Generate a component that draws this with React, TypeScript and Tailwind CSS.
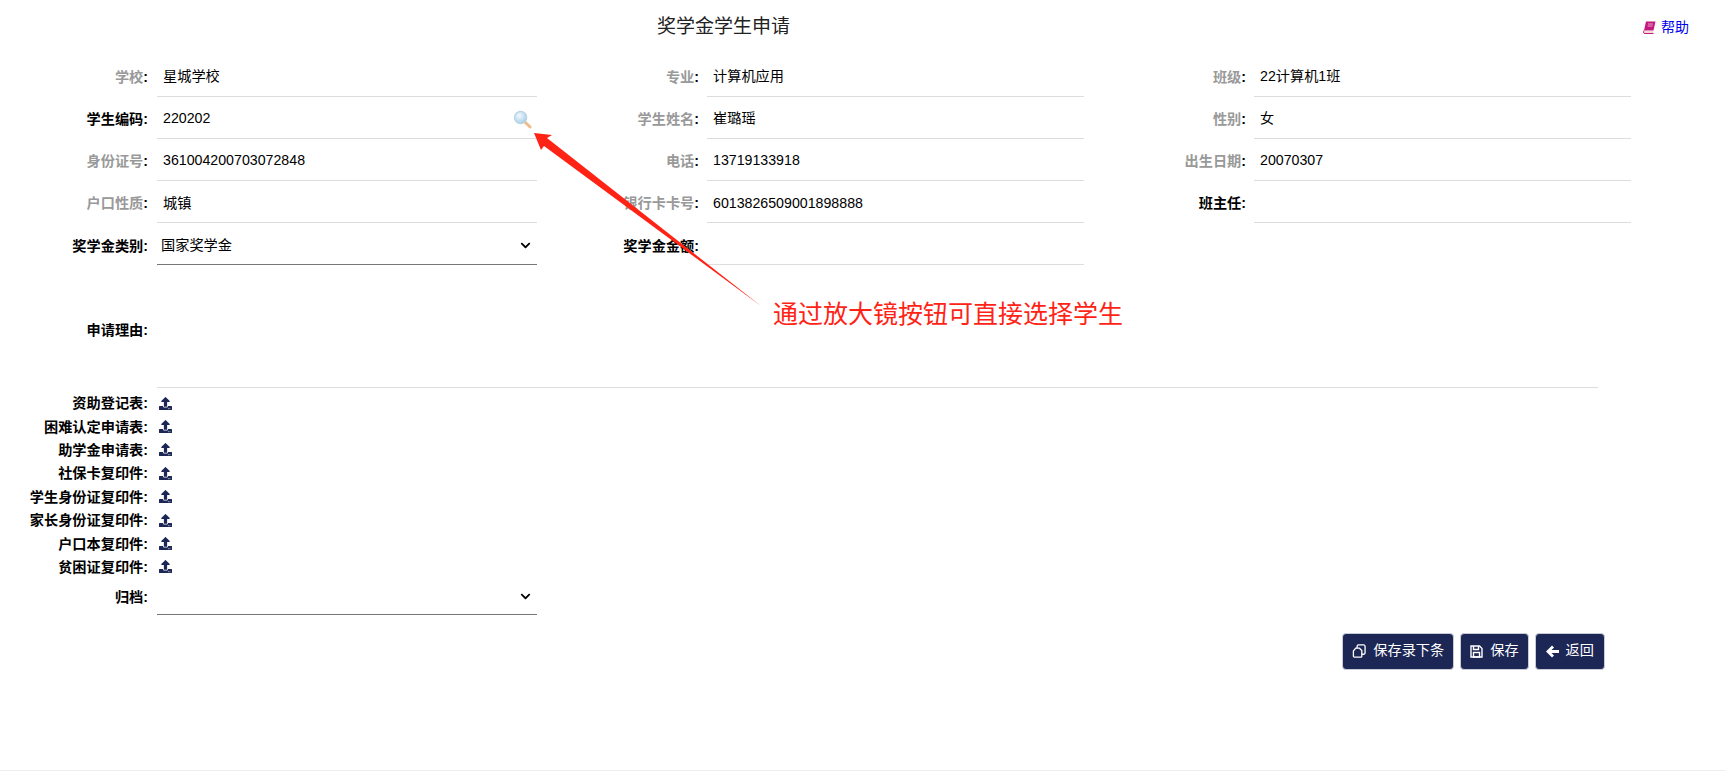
import { FaChevronDown, FaUpload } from "react-icons/fa";

const fontStack = "font-['Liberation_Sans','Noto_Sans_CJK_SC',sans-serif]";

type FieldProps = {
  label: string;
  value?: string;
  muted?: boolean;
  search?: boolean;
  select?: boolean;
  narrowGap?: boolean;
  shorter?: boolean;
  labelClass?: string;
  valueClass?: string;
};

const fields: FieldProps[] = [
  { label: "学校", value: "星城学校", muted: true, labelClass: "mt-[1px]", valueClass: "mt-[2px]" },
  { label: "专业", value: "计算机应用", muted: true, narrowGap: true, labelClass: "mt-[1px]", valueClass: "mt-[2px]" },
  { label: "班级", value: "22计算机1班", muted: true, narrowGap: true, labelClass: "mt-[1px]", valueClass: "mt-[2px]" },
  { label: "学生编码", value: "220202", search: true, labelClass: "mt-[1px]", valueClass: "mt-[3px]" },
  { label: "学生姓名", value: "崔璐瑶", muted: true, narrowGap: true, labelClass: "mt-[1px]", valueClass: "mt-[3px]" },
  { label: "性别", value: "女", muted: true, narrowGap: true, labelClass: "mt-[1px]", valueClass: "mt-[3px]" },
  { label: "身份证号", value: "361004200703072848", muted: true, labelClass: "mt-[1px]", valueClass: "mt-[3px]" },
  { label: "电话", value: "13719133918", muted: true, narrowGap: true, labelClass: "mt-[1px]", valueClass: "mt-[3px]" },
  { label: "出生日期", value: "20070307", muted: true, narrowGap: true, labelClass: "mt-[1px]", valueClass: "mt-[3px]" },
  { label: "户口性质", value: "城镇", muted: true, labelClass: "mt-[2px]", valueClass: "mt-[4px]" },
  { label: "银行卡卡号", value: "6013826509001898888", muted: true, narrowGap: true, labelClass: "mt-[2px]", valueClass: "mt-[4px]" },
  { label: "班主任", narrowGap: true, labelClass: "mt-[2px]" },
  { label: "奖学金类别", value: "国家奖学金", select: true, labelClass: "mt-[3px]", valueClass: "mt-[4px]" },
  { label: "奖学金金额", narrowGap: true, labelClass: "mt-[3px]" },
];

const uploads = [
  "资助登记表",
  "困难认定申请表",
  "助学金申请表",
  "社保卡复印件",
  "学生身份证复印件",
  "家长身份证复印件",
  "户口本复印件",
  "贫困证复印件",
];

function Label({ text, muted }: { text: string; muted?: boolean }) {
  return (
    <div className="w-[148px] shrink-0 text-right font-bold text-[14.2px] leading-5">
      <span className={muted ? "text-[#999999]" : "text-black"}>{text}</span>
      <span className="text-black">:</span>
    </div>
  );
}

function SearchIcon() {
  return (
    <svg width="19" height="19" viewBox="0 0 20 20" className="shrink-0 mt-[3px]">
      <defs>
        <radialGradient id="lens" cx="40%" cy="35%" r="65%">
          <stop offset="0%" stopColor="#f2f8fd" />
          <stop offset="100%" stopColor="#a9cfe8" />
        </radialGradient>
      </defs>
      <line x1="12" y1="12" x2="18" y2="18" stroke="#eebb88" strokeWidth="3" strokeLinecap="round" />
      <circle cx="8" cy="8" r="6.5" fill="url(#lens)" stroke="#bcd3e2" strokeWidth="1.2" />
    </svg>
  );
}

function HelpBookIcon() {
  return (
    <svg width="13" height="13" viewBox="0 0 13 13">
      <polygon points="3,0.5 12.5,0.5 10.5,9.5 1,9.5" fill="#c2187f" />
      <path d="M1 9.5 L0.6 11 Q0.5 12.5 2 12.5 H10.5" fill="none" stroke="#c2187f" strokeWidth="1" />
      <path d="M1.5 11 H10.5" stroke="#e8b7a0" strokeWidth="1" />
      <path d="M5 3 H10 M4.6 5 H9.6" stroke="#f3c4de" strokeWidth="0.8" />
    </svg>
  );
}

function CopyIcon() {
  return (
    <svg width="14" height="14" viewBox="0 0 15 15" fill="none" stroke="white" strokeWidth="1.4">
      <path d="M5.5 4.5V2.5a1.5 1.5 0 0 1 1.5-1.5h5.5a1.5 1.5 0 0 1 1.5 1.5v7a1.5 1.5 0 0 1-1.5 1.5h-2" />
      <path d="M4 4.5h4l2.5 2.5v6a1 1 0 0 1-1 1h-7a1 1 0 0 1-1-1V7.5z" />
    </svg>
  );
}

function SaveIcon() {
  return (
    <svg width="13" height="13" viewBox="0 0 13 13" fill="none" stroke="white" strokeWidth="1.4">
      <path d="M1 1h8.5L12 3.5V12H1z" />
      <path d="M3.5 1v3.5h5V1" />
      <rect x="3.5" y="7.5" width="6" height="4.5" />
    </svg>
  );
}

function BackIcon() {
  return (
    <svg width="13" height="13" viewBox="0 0 13 13" fill="white">
      <polygon points="0,6.5 6,0.5 8,2.5 5.5,5 13,5 13,8 5.5,8 8,10.5 6,12.5" />
    </svg>
  );
}

function Field({ label, value, muted, search, select, narrowGap, shorter, labelClass, valueClass }: FieldProps) {
  return (
    <div className={`flex items-center pr-[14px] ${shorter ? "h-[36px]" : "h-[42px]"}`}>
      <div className={labelClass}>
        <Label text={label} muted={muted} />
      </div>
      <div
        className={`flex-1 h-full flex items-center justify-between border-b text-[14.2px] ${
          narrowGap ? "ml-[8px]" : "ml-[9px]"
        } ${select ? "border-[#777777] pl-[4px] pr-[6px]" : "border-[#dddddd] pl-[6px] pr-[5px]"}`}
      >
        <span className={`text-black ${valueClass ?? ""}`}>{value}</span>
        {search && <SearchIcon />}
        {select && <FaChevronDown className={`text-[11px] text-black ${valueClass ?? ""}`} />}
      </div>
    </div>
  );
}

function ActionButton({ icon, text, wide }: { icon: React.ReactNode; text: string; wide?: boolean }) {
  return (
    <button
      className={`h-[37px] flex items-center gap-[7px] rounded-[4px] bg-[#1c2755] border border-[#c9ccd6] text-white text-[14.2px] ${
        wide ? "px-[10px]" : "px-[9px]"
      }`}
    >
      {icon}
      {text}
    </button>
  );
}

export default function App() {
  return (
    <div className={`${fontStack} relative min-h-[784px] bg-white text-black overflow-hidden`}>
      <div className="relative h-[55px]">
        <h1 className="pt-[14px] pl-[657px] text-[19px] leading-[26px] font-normal text-[#222222]">奖学金学生申请</h1>
        <div className="absolute top-[17px] right-[36px] flex items-center gap-[5px] text-[14px] leading-5 text-[#0000ee]">
          <HelpBookIcon />
          帮助
        </div>
      </div>

      <div className="grid grid-cols-[551px_547px_547px]">
        {fields.map((f) => (
          <Field key={f.label} {...f} />
        ))}
      </div>

      <div className="flex h-[123px] w-[1598px] items-center">
        <div className="mt-[7px]">
          <Label text="申请理由" />
        </div>
        <div className="ml-[9px] flex-1 h-full border-b border-[#dddddd]" />
      </div>

      <div className="flex flex-col pt-[3.5px]">
        {uploads.map((u) => (
          <div key={u} className="flex items-center h-[23.4px]">
            <Label text={u} />
            <FaUpload className="ml-[11px] text-[13px] text-[#1c2755]" />
          </div>
        ))}
      </div>

      <div className="w-[551px] mt-[0.5px]">
        <Field label="归档" select shorter />
      </div>

      <div className="flex justify-end gap-[6px] pr-[120px] mt-[17.5px]">
        <ActionButton icon={<CopyIcon />} text="保存录下条" />
        <ActionButton icon={<SaveIcon />} text="保存" />
        <ActionButton icon={<BackIcon />} text="返回" wide />
      </div>

      <div className="absolute left-0 right-0 top-[770px] border-t border-[#eeeeee]" />

      {/* annotation over the form */}
      <svg className="absolute left-0 top-0 pointer-events-none" width="1725" height="784">
        <polygon points="534,133 552,135 547,138 761,306 544,146 541,150" fill="#ff2316" />
      </svg>
      <div className="absolute left-[773px] top-[297px] text-[25px] leading-[34px] text-[#ff2316]">
        通过放大镜按钮可直接选择学生
      </div>
    </div>
  );
}
